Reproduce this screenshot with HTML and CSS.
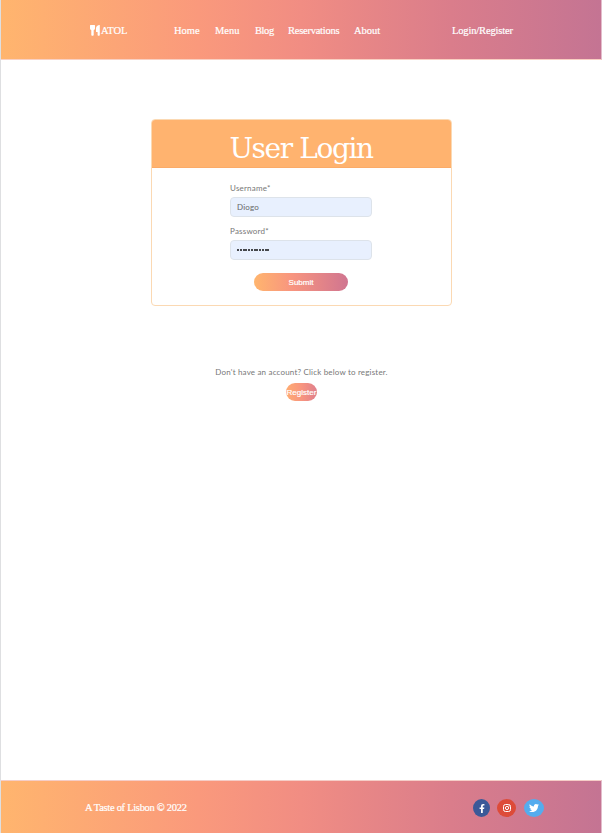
FILE: index.html
```html
<!DOCTYPE html>
<html lang="en">
<head>
<meta charset="utf-8">
<title>A Taste of Lisbon</title>
<link rel="stylesheet" href="styles.css">
</head>
<body>
<header class="bar header">
  <a class="brand"><svg class="brand-icon" viewBox="0 0 10 11"><path d="M0 .5q0-.5.5-.5h4q.5 0 .5.500v2.800c0 1-.5 1.600-1.300 1.900V10q0 .7-.8.7h-.8q-.8 0-.8-.7V5.200C.5 4.900 0 4.300 0 3.300zM9.800 0v10q0 .7-.7.7h-.8q-.7 0-.7-.7V7H6V3.500C6 1.500 7.500 0 9.800 0z"/></svg><span class="brand-name">ATOL</span></a>
  <nav class="nav"><a class="home">Home</a><a class="menu">Menu</a><a class="blog">Blog</a><a class="reservations">Reservations</a><a class="about">About</a></nav>
  <a class="login-link">Login/Register</a>
</header>
<main class="main">
  <section class="card">
    <h1 class="card-title"><span>User Login</span></h1>
    <form class="form">
      <label class="label" for="user">Username*</label>
      <input class="field" id="user" type="text" value="Diogo">
      <label class="label" for="pass">Password*</label>
      <div class="field password" id="pass"><i></i><i></i><i></i><i></i><i></i><i></i><i></i><i></i><i></i><i></i><i></i><i></i></div>
      <button class="button submit" type="button">Submit</button>
    </form>
  </section>
  <p class="prompt">Don't have an account? Click below to register.</p>
  <button class="button register" type="button">Register</button>
</main>
<footer class="bar footer">
  <span class="copyright">A Taste of Lisbon © 2022</span>
  <div class="social">
    <a class="facebook"><svg viewBox="0 0 320 512" width="6" height="9"><path d="M279 288l14-93h-89v-60c0-25 12-50 52-50h41V7s-37-7-72-7c-73 0-121 44-121 125v70H23v93h81v224h100V288z"/></svg></a>
    <a class="instagram"><svg viewBox="0 0 16 16" width="8" height="8"><rect x="1" y="1" width="14" height="14" rx="4"/><circle cx="8" cy="8" r="3.200"/><circle cx="12" cy="4" r=".5"/></svg></a>
    <a class="twitter"><svg viewBox="0 0 24 24" width="10" height="10"><path d="M23.950 4.570a10 10 0 0 1-2.820.77 4.960 4.960 0 0 0 2.160-2.720c-.95.55-2 .95-3.130 1.180a4.920 4.920 0 0 0-8.380 4.480C7.690 8.100 4.070 6.130 1.640 3.160a4.820 4.820 0 0 0-.67 2.480c0 1.710.87 3.210 2.190 4.100a4.900 4.900 0 0 1-2.230-.62v.06a4.920 4.920 0 0 0 3.950 4.830 5 5 0 0 1-2.210.08 4.940 4.940 0 0 0 4.600 3.420A9.870 9.870 0 0 1 0 19.540a13.990 13.990 0 0 0 7.560 2.210c9.050 0 14-7.500 14-13.980l-.02-.64a9.940 9.940 0 0 0 2.410-2.560z"/></svg></a>
  </div>
</footer>
</body>
</html>
```
FILE: styles.css
```css
* { box-sizing: border-box; }
body {
  margin: 0;
  height: 833px;
  display: flex;
  flex-direction: column;
  border-left: 1px solid #dedfe1;
  background: #fff;
  font-family: Lato, sans-serif;
}
.bar {
  display: flex;
  align-items: center;
  color: #fff;
  font: 10.500px "Liberation Serif", serif;
  -webkit-text-stroke: .2px #fff;
  border-right: 1px solid #e3bccb;
  background: linear-gradient(to right, #ffb56e, #fa997c 33%, #f18d83 50%, #da7d8b 75%, #c47493);
}
.header { height: 60px; border-bottom: 1px solid #f9d0c3; padding-top: 2px; white-space: nowrap; }
.brand { display: flex; align-items: center; width: 84px; margin-left: 89px; }
.brand-icon { width: 10px; height: 11px; margin-right: 1px; fill: #fff; }
.brand-name { letter-spacing: -.1px; }
.nav { display: flex; width: 278px; }
.home { width: 41px; }
.menu { width: 40px; }
.blog { width: 33px; letter-spacing: -.4px; }
.reservations { width: 66px; letter-spacing: -.25px; }
.login-link { letter-spacing: -.15px; }
.main { flex: 1; display: flex; flex-direction: column; align-items: center; padding-top: 59px; }
.card { width: 301px; height: 187px; border: 1px solid #fbd9b3; border-radius: 4px; overflow: hidden; }
.card-title {
  margin: 0;
  height: 48px;
  padding: 5px 1px 0 0;
  background: #ffb36f;
  border-bottom: 1px solid #fbab68;
  color: #fff;
  font: 28px/48px "DejaVu Serif", serif;
  letter-spacing: -1.400px;
  text-align: center;
  white-space: nowrap;
}
.form { display: flex; flex-direction: column; width: 142px; margin: 15px 0 0 78px; }
.label { height: 14px; font-size: 8px; line-height: 11px; color: #777; letter-spacing: .2px; }
.field {
  width: 142px;
  height: 20px;
  margin: 0 0 9px;
  padding: 0 6px;
  border: 1px solid #dde3ea;
  border-radius: 4px;
  background: #e8f0fe;
  color: #666;
  font: 8px Lato, sans-serif;
  letter-spacing: .2px;
}
.password { display: flex; align-items: center; gap: .75px; }
.password i { width: 2px; height: 2px; border-radius: 50%; background: #111; }
.button {
  height: 18px;
  padding: 0;
  border: 0;
  border-radius: 9px;
  color: #fff;
  font: 8px "Liberation Sans", sans-serif;
  -webkit-text-stroke: .2px #fff;
}
.submit { width: 94px; margin: 4px auto 0; background: linear-gradient(to right, #ffb56e, #f8957f 40%, #d07590); }
.prompt { margin: 60px 0 6px; color: #777; font-size: 8px; line-height: 12px; letter-spacing: .18px; }
.register { width: 31px; margin-top: -1px; background: linear-gradient(to right, #ffac71, #f8957f 50%, #df7f8c); }
.footer { height: 53px; border-top: 1px solid #f5cdc7; padding-left: 84px; }
.copyright { width: 388px; letter-spacing: -.3px; }
.social { display: flex; padding-top: 2px; }
.social a { display: flex; align-items: center; justify-content: center; height: 18px; border-radius: 50%; }
.social svg { fill: #fff; }
.facebook { width: 17px; background: #3b5998; }
.instagram { width: 19px; margin: 0 8px 0 7px; background: #dd4b39; }
.social .instagram svg { fill: none; stroke: #fff; stroke-width: 2; }
.twitter { width: 20px; background: #55acee; }
```
